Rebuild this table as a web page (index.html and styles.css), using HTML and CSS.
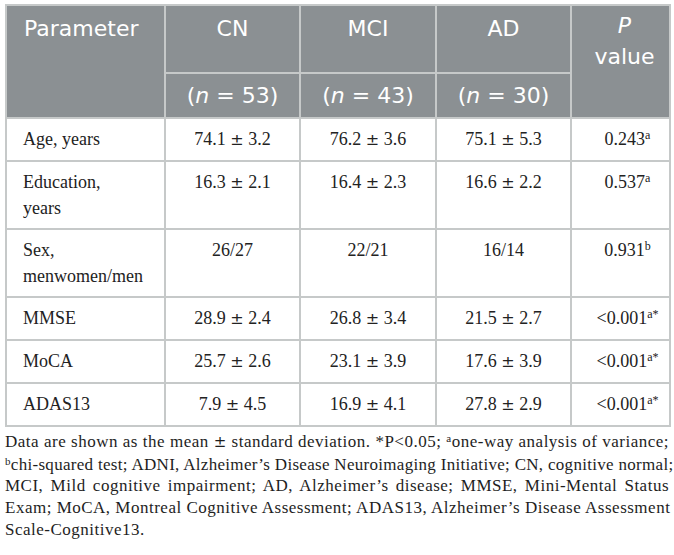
FILE: index.html
```html
<!DOCTYPE html>
<html lang="en">
<head>
<meta charset="utf-8">
<title>Table</title>
<link rel="stylesheet" href="styles.css">
</head>
<body>
<div class="wrap">
<table class="data">
  <colgroup>
    <col class="c1"><col class="c2"><col class="c3"><col class="c4"><col class="c5">
  </colgroup>
  <thead>
    <tr class="h1">
      <th rowspan="2" class="param">Parameter</th>
      <th>CN</th>
      <th>MCI</th>
      <th>AD</th>
      <th rowspan="2" class="pval"><span class="pl"><i>P</i></span><span class="pl">value</span></th>
    </tr>
    <tr class="h2">
      <th>(<i>n</i> = 53)</th>
      <th>(<i>n</i> = 43)</th>
      <th>(<i>n</i> = 30)</th>
    </tr>
  </thead>
  <tbody>
    <tr><td class="lab">Age, years</td><td>74.1 <span class="pm">±</span> 3.2</td><td>76.2 <span class="pm">±</span> 3.6</td><td>75.1 <span class="pm">±</span> 5.3</td><td class="p">0.243<sup>a</sup></td></tr>
    <tr><td class="lab">Education,<br>years</td><td>16.3 <span class="pm">±</span> 2.1</td><td>16.4 <span class="pm">±</span> 2.3</td><td>16.6 <span class="pm">±</span> 2.2</td><td class="p">0.537<sup>a</sup></td></tr>
    <tr><td class="lab">Sex,<br>menwomen/men</td><td>26/27</td><td>22/21</td><td>16/14</td><td class="p">0.931<sup>b</sup></td></tr>
    <tr><td class="lab">MMSE</td><td>28.9 <span class="pm">±</span> 2.4</td><td>26.8 <span class="pm">±</span> 3.4</td><td>21.5 <span class="pm">±</span> 2.7</td><td class="p">&lt;0.001<sup>a*</sup></td></tr>
    <tr><td class="lab">MoCA</td><td>25.7 <span class="pm">±</span> 2.6</td><td>23.1 <span class="pm">±</span> 3.9</td><td>17.6 <span class="pm">±</span> 3.9</td><td class="p">&lt;0.001<sup>a*</sup></td></tr>
    <tr><td class="lab">ADAS13</td><td>7.9 <span class="pm">±</span> 4.5</td><td>16.9 <span class="pm">±</span> 4.1</td><td>27.8 <span class="pm">±</span> 2.9</td><td class="p">&lt;0.001<sup>a*</sup></td></tr>
  </tbody>
</table>
<p class="note">
  <span class="ln">Data are shown as the mean <span class="pm">±</span> standard deviation. *P&lt;0.05; <sup>a</sup>one-way analysis of variance;</span>
  <span class="ln tight"><sup>b</sup>chi-squared test; ADNI, Alzheimer’s Disease Neuroimaging Initiative; CN, cognitive normal;</span>
  <span class="ln">MCI, Mild cognitive impairment; AD, Alzheimer’s disease; MMSE, Mini-Mental Status</span>
  <span class="ln">Exam; MoCA, Montreal Cognitive Assessment; ADAS13, Alzheimer’s Disease Assessment</span>
  <span class="ln last">Scale-Cognitive13.</span>
</p>
</div>
</body>
</html>
```
FILE: styles.css
```css
html, body {
  margin: 0;
  padding: 0;
  background: #ffffff;
}
.wrap {
  padding: 4px 5px 0 5px;
  width: 664px;
}
.data {
  border-collapse: collapse;
  table-layout: fixed;
  width: 664px;
  font-family: "Liberation Serif", "Times New Roman", serif;
  color: #222222;
}
.c1 { width: 159px; }
.c2 { width: 135px; }
.c3 { width: 136px; }
.c4 { width: 135px; }
.c5 { width: 99px; }

.data th, .data td {
  border: 2px solid #c6c9c9;
}
.data th {
  background: #8b9093;
  color: #ffffff;
  font-family: "DejaVu Sans", sans-serif;
  font-weight: normal;
  font-size: 22px;
  line-height: 31px;
  vertical-align: top;
  text-align: center;
  padding: 0 4px;
}
.h1 th {
  height: 68px;
  padding-top: 7px;
  box-sizing: border-box;
}
.h2 th {
  height: 43px;
  vertical-align: middle;
  padding-top: 0;
}
.data th.param {
  text-align: left;
  padding-left: 17px;
}
.data th.pval {
  padding-top: 4px;
  padding-left: 10px;
  padding-right: 2px;
}
.pl { display: block; }
.data td {
  font-size: 18px;
  line-height: 26px;
  padding: 7px 8px 7px 8px;
  text-align: center;
  vertical-align: top;
}
.data td.lab {
  text-align: left;
  padding-left: 16px;
}
.data td.p {
  padding-left: 16px;
  padding-right: 2px;
}
.pm {
  font-family: "DejaVu Sans", sans-serif;
  font-size: 16px;
}
.data sup {
  font-size: 12px;
  line-height: 0;
  vertical-align: 6px;
}
.note {
  margin: 4px 0 0 0;
  font-family: "Liberation Serif", "Times New Roman", serif;
  font-size: 17px;
  letter-spacing: 0.5px;
  line-height: 21.7px;
  color: #1e1e1e;
}
.ln {
  display: block;
  text-align: justify;
  text-align-last: justify;
  white-space: nowrap;
}
.ln.tight {
  letter-spacing: 0.3px;
}
.ln.last {
  text-align: left;
  text-align-last: left;
}
.note .pm {
  font-size: 15px;
}
.note sup {
  font-size: 11px;
  line-height: 0;
  vertical-align: 5px;
}
```
